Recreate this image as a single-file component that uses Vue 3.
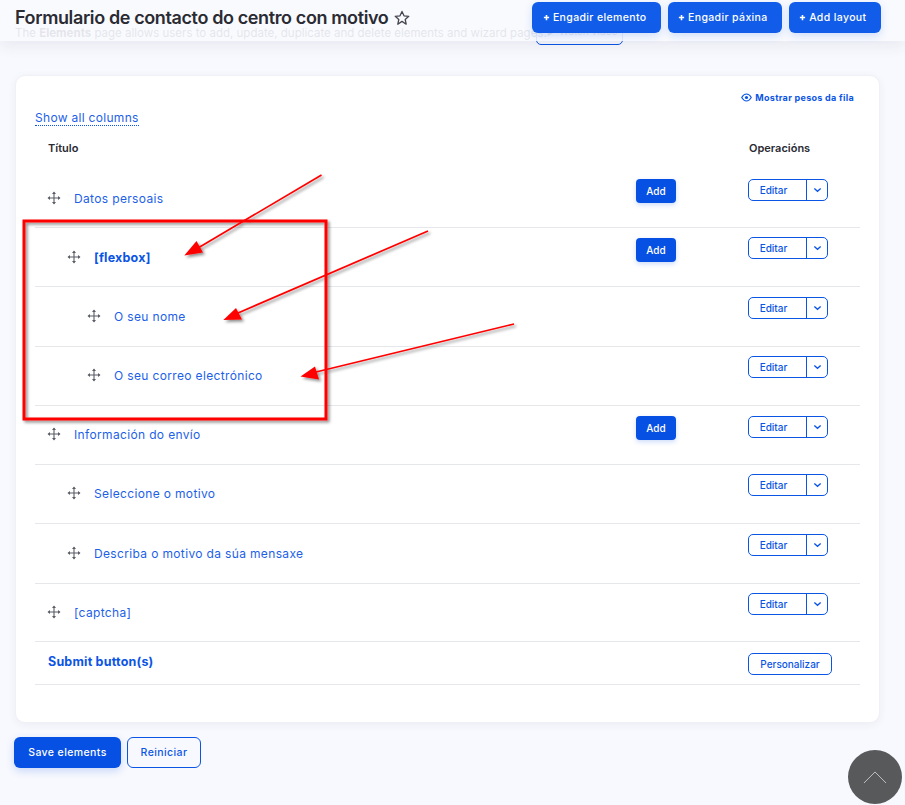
<script setup>
const rows = [
  { title: 'Datos persoais', level: 0, add: true, h: 59, t: 1, o: 0 },
  { title: '[flexbox]', level: 1, add: true, bold: true, h: 59, t: 1, o: -1 },
  { title: 'O seu nome', level: 2, h: 60, t: 1, o: 0 },
  { title: 'O seu correo electrónico', level: 2, h: 59, t: 0, o: -1 },
  { title: 'Información do envío', level: 0, add: true, h: 59, t: 0, o: 0 },
  { title: 'Seleccione o motivo', level: 1, h: 59, t: 0, o: -1 },
  { title: 'Describa o motivo da súa mensaxe', level: 1, h: 60, t: 1, o: 0 },
  { title: '[captcha]', level: 0, h: 58, t: 0, o: -1 },
]
const actions = ['Engadir elemento', 'Engadir páxina', 'Add layout']
const arrows = [
  { line: 'M321.500 175 L198 248', head: '184.300,255.500 196.500,241 203,252.500' },
  { line: 'M428 231 L238 313', head: '223.300,320 236,308 242,319.500' },
  { line: 'M514 324 L316 372', head: '300.500,376.500 315,366.500 319,379.500' },
]
</script>

<template>
  <div class="page">
    <header class="top">
      <p class="intro">
        The <b>Elements</b> page allows users to add, update, duplicate and delete elements and wizard pages.
        <span class="watch">▶ Watch video</span>
      </p>
      <div class="bar">
        <h1 class="title">
          Formulario de contacto do centro con motivo
          <svg class="star" viewBox="0 0 16 16" width="16" height="16">
            <path d="M8 1.4l2 4.4 4.8.5-3.6 3.2 1 4.7L8 11.4l-4.200 2.800 1-4.700L1.200 6.300 6 5.800z" fill="none" stroke="#45464f" stroke-width="1.300" stroke-linejoin="round" />
          </svg>
        </h1>
        <div class="actions">
          <button v-for="a in actions" :key="a" class="action" type="button">
            <svg viewBox="0 0 8 8" width="7" height="7"><path d="M4 1v6M1 4h6" stroke="#fff" stroke-width="1.800" /></svg>
            {{ a }}
          </button>
        </div>
      </div>
    </header>

    <main class="card">
      <a class="weights">
        <svg viewBox="0 0 16 12" width="11" height="9">
          <path d="M1 6c2-3.400 4.400-5 7-5s5 1.600 7 5c-2 3.400-4.400 5-7 5s-5-1.600-7-5z" fill="none" stroke="#0b55e5" stroke-width="1.600" />
          <circle cx="8" cy="6" r="2.300" fill="#0b55e5" />
        </svg>
        Mostrar pesos da fila
      </a>
      <a class="show-all">Show all columns</a>

      <div class="thead">
        <span class="c-title">Título</span>
        <span class="c-add"></span>
        <span class="c-ops">Operacións</span>
      </div>

      <div v-for="r in rows" :key="r.title" class="row" :style="{ height: r.h + 'px' }">
        <div class="c-title cell-title" :style="{ paddingLeft: 12 + r.level * 20 + 'px', marginTop: r.t + 'px' }">
          <svg class="drag" viewBox="0 0 14 14" width="14" height="14">
            <path d="M7 1.500v11M1.500 7h11" stroke="#5b5d66" stroke-width="1.100" fill="none" />
            <path d="M7 .5L9 3H5zM7 13.500L5 11h4zM.5 7L3 5v4zM13.500 7L11 9V5z" fill="#5b5d66" />
          </svg>
          <a class="link" :class="{ bold: r.bold }">{{ r.title }}</a>
        </div>
        <div class="c-add"><button v-if="r.add" class="add" type="button">Add</button></div>
        <div class="c-ops">
          <div class="split" :style="{ marginTop: r.o + 'px' }">
            <span class="split-main">Editar</span>
            <span class="split-caret">
              <svg viewBox="0 0 10 6" width="9" height="6"><path d="M1.500 1.200L5 4.400l3.500-3.200" fill="none" stroke="#0b55e5" stroke-width="1.500" /></svg>
            </span>
          </div>
        </div>
      </div>

      <div class="row submit">
        <div class="c-title"><a class="link bold sub">Submit button(s)</a></div>
        <div class="c-add"></div>
        <div class="c-ops"><span class="custom">Personalizar</span></div>
      </div>
    </main>

    <footer class="foot">
      <button class="save" type="button">Save elements</button>
      <button class="reset" type="button">Reiniciar</button>
    </footer>

    <svg class="marks" viewBox="0 0 905 805" width="905" height="805">
      <defs>
        <filter id="sh" x="-10%" y="-10%" width="120%" height="120%">
          <feDropShadow dx="2" dy="2" stdDeviation="1.500" flood-color="#000" flood-opacity=".45" />
        </filter>
      </defs>
      <g filter="url(#sh)">
        <rect x="24" y="221" width="302" height="198" fill="none" stroke="#f00" stroke-width="3" />
        <g v-for="(m, i) in arrows" :key="i">
          <path :d="m.line" stroke="#f00" stroke-width="1.700" fill="none" />
          <polygon :points="m.head" fill="#f00" />
        </g>
      </g>
    </svg>

    <button class="up" type="button" aria-label="Top">
      <svg viewBox="0 0 26 14" width="24" height="13"><path d="M1 13L13 1l12 12" fill="none" stroke="#c9c9cb" stroke-width="1" /></svg>
    </button>
  </div>
</template>

<style scoped>
.page {
  position: relative;
  width: 905px;
  height: 805px;
  overflow: hidden;
  background: #f8f9fe;
  font-family: Inter, "Liberation Sans", sans-serif;
  color: #2a2b33;
}
.top {
  position: relative;
  height: 41px;
}
.intro {
  position: absolute;
  left: 15px;
  top: 25px;
  margin: 0;
  font-size: 11.5px;
  line-height: 16px;
  color: #2a2b33;
  white-space: nowrap;
}
.watch {
  position: absolute;
  left: 521px;
  top: -4px;
  width: 87px;
  height: 24px;
  box-sizing: border-box;
  border: 1px solid #0b55e5;
  border-radius: 5px;
  padding-left: 10px;
  font-size: 10px;
  line-height: 18px;
}
.bar {
  position: relative;
  display: flex;
  justify-content: space-between;
  box-sizing: border-box;
  height: 41px;
  padding: 2px 24px 0 15px;
  background: rgba(248, 249, 254, .9);
  box-shadow: 0 6px 14px rgba(40, 50, 90, .07);
}
.title {
  margin: 0;
  display: flex;
  align-items: center;
  gap: 6px;
  height: 30px;
  font-size: 18px;
  font-weight: 600;
  letter-spacing: -.38px;
  color: #2a2b33;
  white-space: nowrap;
}
.star { margin-top: 1px; }
.actions { display: flex; gap: 6.5px; }
.action {
  display: flex;
  align-items: center;
  gap: 3px;
  height: 31px;
  padding: 0 14.5px 0 10.5px;
  border: 0;
  border-radius: 6px;
  background: #115de9;
  color: #fff;
  font: 500 10.5px Inter, sans-serif;
  letter-spacing: .37px;
  box-shadow: 0 3px 8px rgba(17, 93, 233, .18);
}
.card {
  position: relative;
  box-sizing: border-box;
  width: 865px;
  height: 648px;
  margin: 34px 0 0 15px;
  padding: 0 19px;
  background: #fff;
  border: 1px solid #f0f1f6;
  border-radius: 10px;
  box-shadow: 0 2px 8px rgba(40, 50, 90, .06);
}
.weights {
  display: flex;
  align-items: center;
  justify-content: flex-end;
  gap: 3px;
  padding: 15px 6px 0 0;
  height: 13px;
  font-size: 9px;
  font-weight: 700;
  letter-spacing: .3px;
  line-height: 13px;
  color: #0b55e5;
}
.show-all {
  display: inline-block;
  margin-top: 6px;
  font-size: 12px;
  letter-spacing: .3px;
  line-height: 15px;
  color: #1d5fe8;
  border-bottom: 1px dotted #0b55e5;
}
.thead {
  display: flex;
  height: 43px;
  padding-top: 14px;
  box-sizing: border-box;
  font-size: 11px;
  font-weight: 600;
  line-height: 16px;
}
.c-title { flex: 0 0 601px; box-sizing: border-box; }
.thead .c-title { padding-left: 13px; }
.thead .c-ops { padding-left: 1px; }
.c-add { flex: 0 0 112px; }
.c-ops { flex: 1; }
.row {
  display: flex;
  box-sizing: border-box;
  border-bottom: 1px solid #e6e7ea;
  padding-top: 10px;
}
.cell-title {
  display: flex;
  align-items: center;
  gap: 13px;
  height: 36px;
}
.drag { flex: none; }
.link { font-size: 12px; letter-spacing: .35px; color: #1d5fe8; }
.link.bold { font-size: 12.5px; letter-spacing: .2px; font-weight: 700; color: #0b55e5; }
.link.sub { display: block; padding: 0 0 0 13px; line-height: 18px; }
.add {
  display: block;
  width: 40px;
  height: 24px;
  padding: 0;
  border: 0;
  border-radius: 4px;
  background: #0650e3;
  color: #fff;
  font: 500 10px Inter, sans-serif;
  box-shadow: 0 2px 5px rgba(6, 80, 227, .2);
}
.split {
  display: flex;
  width: 80px;
  height: 22px;
  box-sizing: border-box;
  border: 1px solid #0b55e5;
  border-radius: 5px;
}
.split-main {
  flex: 1;
  text-align: center;
  font-size: 10px;
  font-weight: 500;
  line-height: 20px;
  color: #0b55e5;
  padding-right: 8px;
}
.split-caret {
  flex: 0 0 20px;
  display: flex;
  align-items: center;
  justify-content: center;
  border-left: 1px solid #0b55e5;
}
.submit { height: 43px; padding-top: 11px; }
.custom {
  display: block;
  width: 84px;
  height: 22px;
  box-sizing: border-box;
  border: 1px solid #0b55e5;
  border-radius: 5px;
  text-align: center;
  font-size: 10px;
  font-weight: 500;
  line-height: 20px;
  color: #0b55e5;
}
.foot {
  display: flex;
  gap: 6px;
  margin: 14px 0 0 14px;
}
.save, .reset {
  height: 31px;
  border-radius: 6px;
  font: 500 10.500px Inter, sans-serif;
  letter-spacing: .4px;
}
.save {
  width: 107px;
  border: 0;
  background: #0650e3;
  color: #fff;
  box-shadow: 0 3px 8px rgba(6, 80, 227, .2);
}
.reset {
  width: 74px;
  border: 1px solid #0b55e5;
  background: transparent;
  color: #0b55e5;
}
.marks {
  position: absolute;
  left: 0;
  top: 0;
  pointer-events: none;
}
.up {
  position: absolute;
  left: 848px;
  top: 750px;
  width: 54px;
  height: 54px;
  padding: 0;
  border: 0;
  border-radius: 50%;
  background: #58595b;
  display: flex;
  align-items: center;
  justify-content: center;
}
</style>
